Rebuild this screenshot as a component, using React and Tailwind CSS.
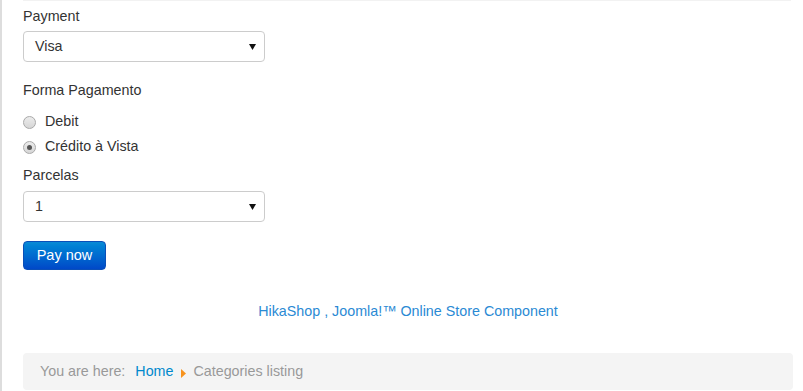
export default function App() {
  const font = { fontFamily: '"Liberation Sans", Arial, sans-serif' };
  const Select = ({ value }) => (
    <div className="flex h-[31px] w-[242px] items-center justify-between rounded-[4px] border border-[#cccccc] bg-white pl-[11px] pr-[8px] text-[14.3px] text-[#333333]">
      <span>{value}</span>
      <svg width="7" height="6" viewBox="0 0 7 6"><path d="M0 0 H7 L3.5 6 Z" fill="#111" /></svg>
    </div>
  );
  const Radio = ({ checked, label }) => (
    <div className="flex h-[20px] items-center">
      <span className="flex h-[13px] w-[13px] items-center justify-center rounded-full border border-[#a9a9a9] bg-gradient-to-b from-[#ececec] to-[#d6d6d6]">
        {checked && <span className="h-[5px] w-[5px] rounded-full bg-[#555555]" />}
      </span>
      <span className="ml-[9px] text-[14.3px] text-[#333333]">{label}</span>
    </div>
  );
  return (
    <div style={font} className="h-[391px] w-[803px] overflow-hidden bg-white">
      <div className="flex h-full border-l-2 border-[#dddddd]">
        <div className="relative flex flex-1 flex-col pl-[21px] pr-[10px]">
          <div className="absolute left-[21px] right-[12px] top-0 h-px bg-[#f2f2f2]" />
          <div className="mt-[6px] h-[20px] text-[14.3px] leading-[20px] text-[#333333]">Payment</div>
          <div className="mt-[5px]"><Select value="Visa" /></div>
          <div className="mt-[18px] h-[20px] text-[14.3px] leading-[20px] text-[#333333]">Forma Pagamento</div>
          <div className="mt-[12px] flex flex-col gap-[5px]">
            <Radio label="Debit" />
            <Radio checked label="Crédito à Vista" />
          </div>
          <div className="mt-[8px] h-[20px] text-[14.3px] leading-[20px] text-[#333333]">Parcelas</div>
          <div className="mt-[6px]"><Select value="1" /></div>
          <div className="mt-[19px]">
            <button className="h-[29px] w-[83px] rounded-[4px] border border-[#0a4fb8] bg-gradient-to-b from-[#0a8ad6] to-[#0048c8] text-[14.5px] text-white">
              Pay now
            </button>
          </div>
          <div className="mt-[31px] text-center text-[14.3px] leading-[20px] text-[#2a8ad4]">
            HikaShop , Joomla!™ Online Store Component
          </div>
          <div className="mt-[32px] flex h-[37px] items-center rounded-[4px] bg-[#f4f4f4] pl-[17px] text-[14.3px]">
            <span className="text-[#999999]">You are here:</span>
            <span className="ml-[10px] text-[#0088cc]">Home</span>
            <svg className="ml-[8px] mt-[3px]" width="5" height="9" viewBox="0 0 5 9"><path d="M0 0 L5 4.5 L0 9 Z" fill="#f7931e" /></svg>
            <span className="ml-[7px] text-[#999999]">Categories listing</span>
          </div>
        </div>
      </div>
    </div>
  );
}
